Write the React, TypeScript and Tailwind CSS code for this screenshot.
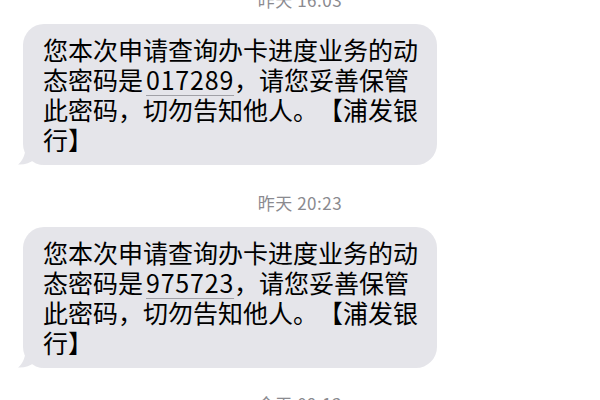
import React from 'react';

const font = { fontFamily: '"Noto Sans CJK SC", "Noto Sans", sans-serif' };

function Stamp({ text }: { text: string }) {
  return (
    <div className="w-full text-center text-[17px] leading-[20px] tracking-[0.5px] text-[#8a8a8f]">{text}</div>
  );
}

function Bubble({ code }: { code: string }) {
  return (
    <div className="relative ml-[23px] w-[414px]">
      <div className="relative z-10 rounded-[21px] bg-[#e5e5ea] pl-5 pr-[16px] pt-[10px] pb-[11px] text-[25px] leading-[30px] text-black [text-spacing-trim:space-all]">
        您本次申请查询办卡进度业务的动态密码是
        <span className="ml-[3px] tracking-[0.8px] underline decoration-[#a0a0a6] decoration-1 underline-offset-[5px]">{code}</span>
        ，请您妥善保管此密码，切勿告知他人。【浦发银行】
      </div>
      <svg className="absolute bottom-0 -left-[5px] z-0" width="24" height="22" viewBox="0 0 24 22">
        <path d="M8 0 C8 10 5 18 0 21.5 C6 22 12 20 17 16 L24 22 L24 0 Z" fill="#e5e5ea" />
      </svg>
    </div>
  );
}

export default function App() {
  return (
    <div className="h-[400px] w-[600px] overflow-hidden bg-white" style={font}>
      <div className="-mt-[10px] flex flex-col">
        <Stamp text="昨天 16:03" />
        <div className="mt-[14px]">
          <Bubble code="017289" />
        </div>
        <div className="mt-[28px]">
          <Stamp text="昨天 20:23" />
        </div>
        <div className="mt-[14px]">
          <Bubble code="975723" />
        </div>
        <div className="mt-[26px]">
          <Stamp text="今天 09:12" />
        </div>
      </div>
    </div>
  );
}
